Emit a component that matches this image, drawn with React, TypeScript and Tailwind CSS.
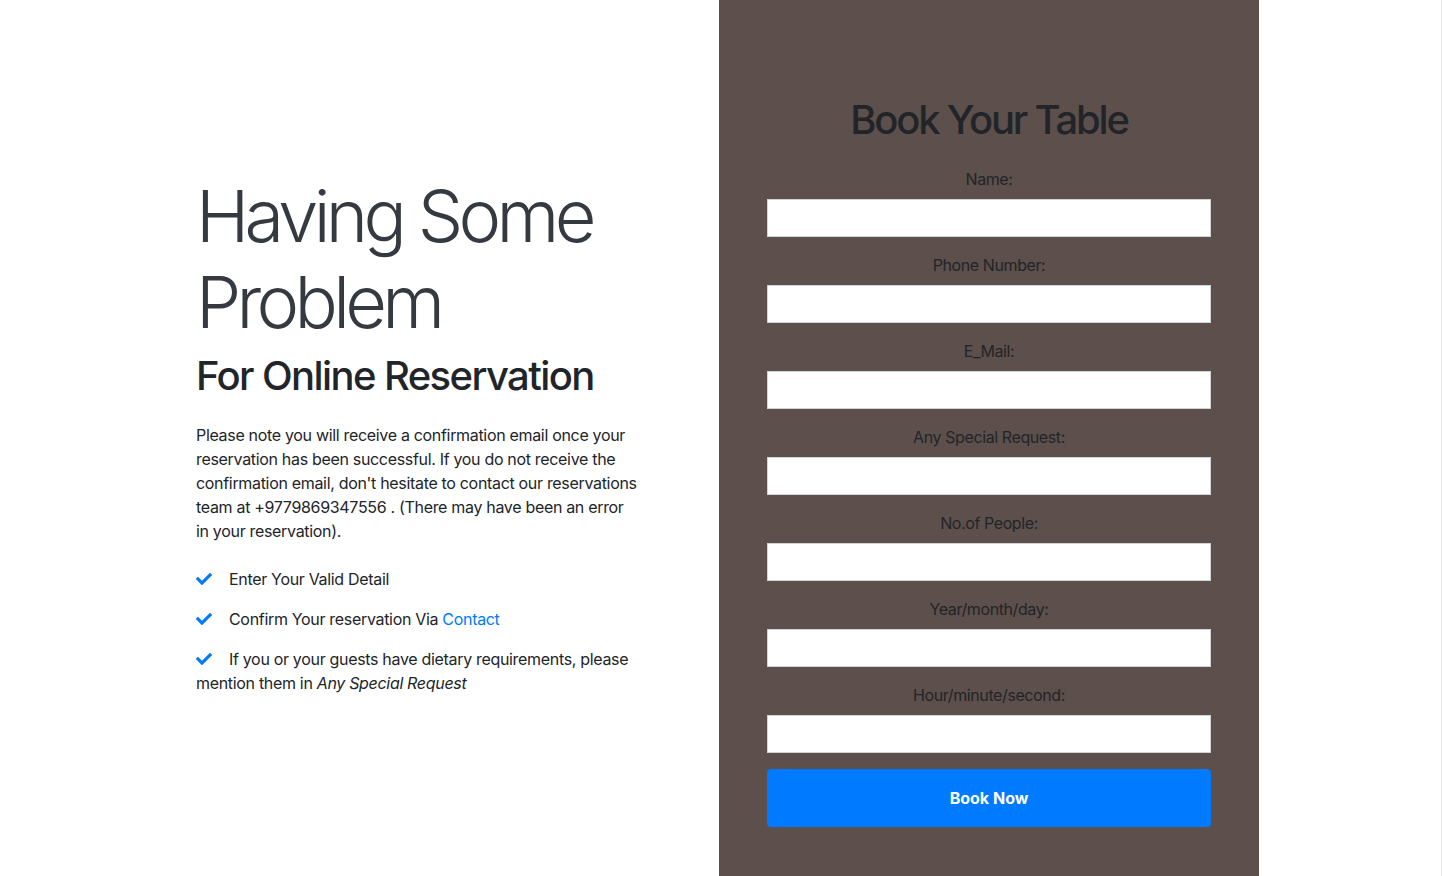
import { FaCheck } from "react-icons/fa";

const fields = [
  "Name:",
  "Phone Number:",
  "E_Mail:",
  "Any Special Request:",
  "No.of People:",
  "Year/month/day:",
  "Hour/minute/second:",
];

export default function App() {
  return (
    <div
      className="flex w-[1442px] h-[876px] overflow-hidden bg-white border-r border-[#e6e6e6] text-[#212529]"
      style={{ fontFamily: "Inter, 'Noto Sans', sans-serif" }}
    >
      {/* info column */}
      <div className="w-[719px] shrink-0 pl-[196px] pr-[80px] pt-[173px]">
        <h1 className="text-[72px] font-light leading-[1.2] tracking-[-0.065em] text-[#343a40]">
          Having Some Problem
        </h1>
        <h2 className="mt-[6px] text-[40px] font-medium leading-[1.2] tracking-[-0.04em] text-[#212529]">
          For Online Reservation
        </h2>
        <p className="mt-[23px] text-[16px] leading-6 tracking-[-0.02em]">
          Please note you will receive a confirmation email once your
          reservation has been successful. If you do not receive the
          confirmation email, don't hesitate to contact our reservations team
          at +9779869347556 . (There may have been an error in your
          reservation).
        </p>
        <ul className="mt-6 space-y-4 text-[16px] leading-6 tracking-[-0.02em]">
          <li>
            <FaCheck className="inline-block align-[-2px] mr-[17px] text-[#007bff]" size={16} />
            Enter Your Valid Detail
          </li>
          <li>
            <FaCheck className="inline-block align-[-2px] mr-[17px] text-[#007bff]" size={16} />
            Confirm Your reservation Via{" "}
            <a href="#" className="text-[#007bff]">
              Contact
            </a>
          </li>
          <li>
            <FaCheck className="inline-block align-[-2px] mr-[17px] text-[#007bff]" size={16} />
            If you or your guests have dietary requirements, please mention
            them in <em>Any Special Request</em>
          </li>
        </ul>
      </div>

      {/* booking form */}
      <div className="w-[540px] shrink-0 bg-[#5d4f4b] px-12 pt-[96px]">
        <h2 className="text-center text-[40px] font-medium leading-[1.2] tracking-[-0.055em] text-[#212529]">
          Book Your Table
        </h2>
        <form className="mt-[23px]" onSubmit={(e) => e.preventDefault()}>
          {fields.map((label) => (
            <div key={label} className="mb-4">
              <label className="block mb-2 text-center text-[16px] leading-6 tracking-[-0.025em] text-[#212529]">
                {label}
              </label>
              <input
                type="text"
                className="block w-full h-[38px] bg-white border border-[#ced4da] outline-none"
              />
            </div>
          ))}
          <button
            type="submit"
            className="w-full h-[58px] rounded-[4px] bg-[#007bff] text-white text-[16px] font-bold"
          >
            Book Now
          </button>
        </form>
      </div>

      <div className="flex-1" />
    </div>
  );
}
